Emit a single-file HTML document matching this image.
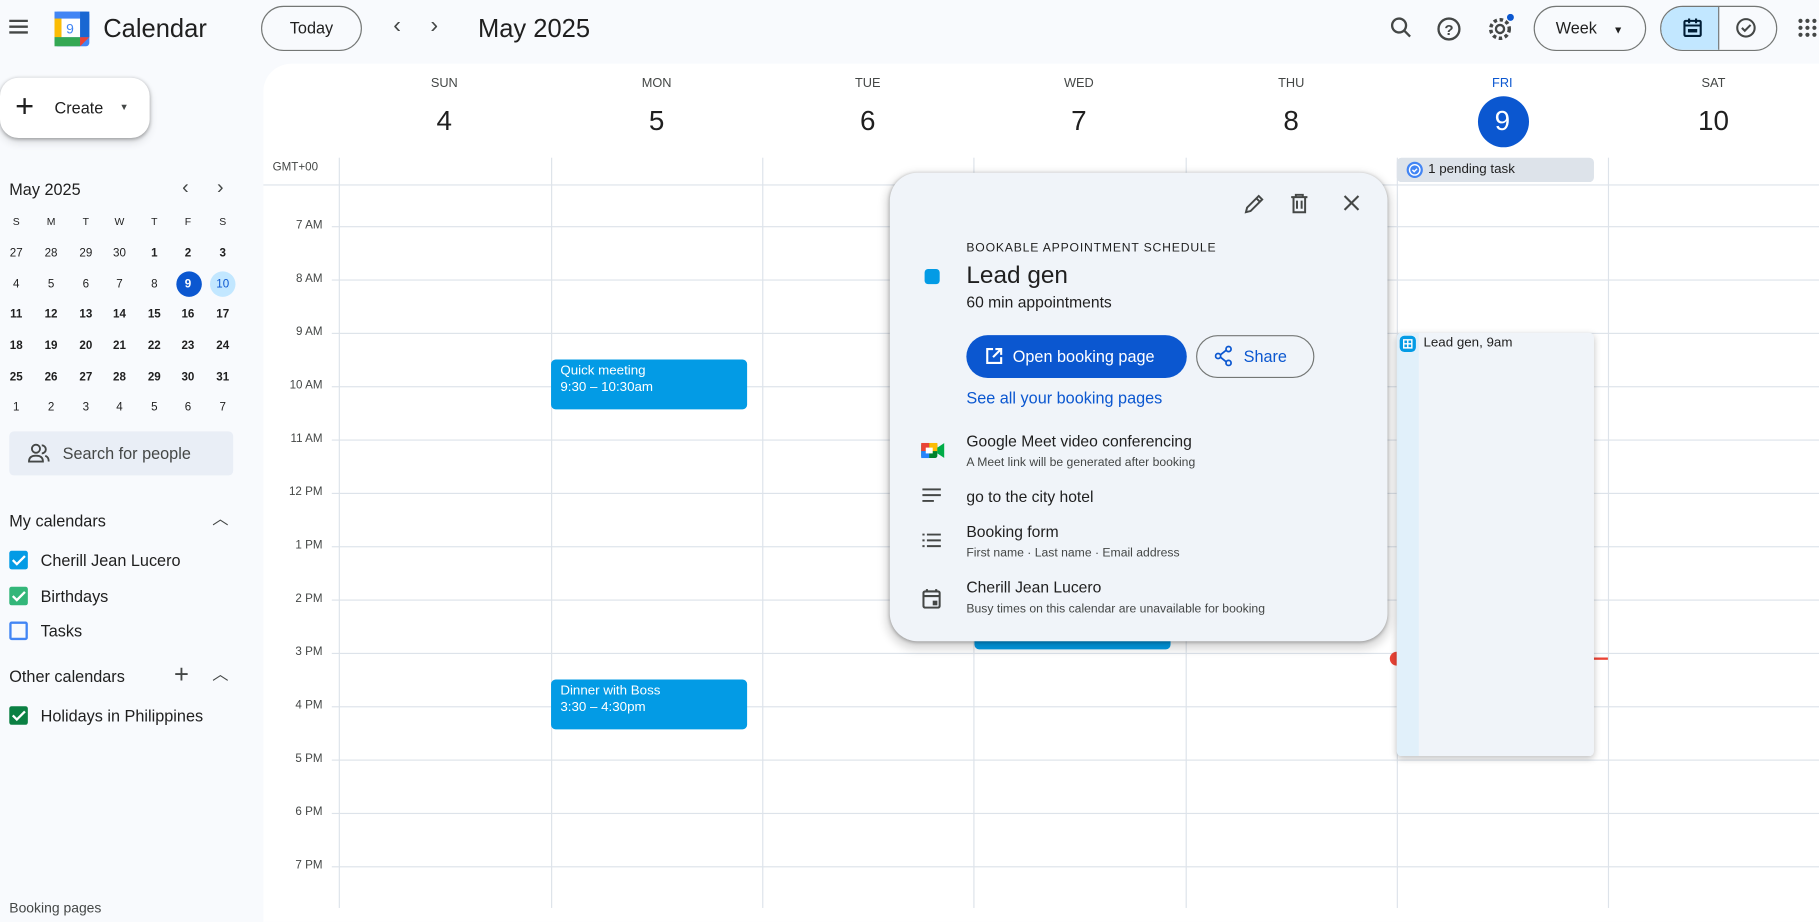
<!DOCTYPE html>
<html><head><meta charset="utf-8"><style>
*{box-sizing:border-box;margin:0;padding:0}
html,body{width:1819px;height:908px;overflow:hidden;background:#f8fafd}
#s{position:absolute;left:0;top:0;width:1568px;height:783px;transform:scale(1.1601,1.1596);transform-origin:0 0;font-family:"Liberation Sans",Arial,sans-serif;color:#1f1f1f;background:#f8fafd}
.a{position:absolute}
.mc{position:absolute;width:20px;text-align:center;font-size:10px;color:#1f1f1f}
.hl{position:absolute;left:286px;right:0;height:1px;background:#dde3ea}
.vl{position:absolute;top:136px;bottom:0;width:1px;background:#dde3ea}
.tl{position:absolute;left:230px;width:48px;text-align:right;font-size:10px;color:#444746}
.dn{position:absolute;width:182px;text-align:center;font-size:11px;color:#444746;top:66px}
.dd{position:absolute;width:182px;text-align:center;font-size:24px;color:#1f1f1f;top:91px}
.ev{position:absolute;background:#039be5;color:#fff;border-radius:4px;font-size:11.5px;padding:3px 8px;line-height:14px}
.cb{position:absolute;left:8px;width:16px;height:16px;border-radius:2px}
.cb svg{position:absolute;left:1px;top:1px}
.cl{position:absolute;left:35px;font-size:14px}
</style></head><body><div id="s">
<svg class="a" style="left:7px;top:15px" width="18" height="16"><path d="M1 3h16M1 8h16M1 13h16" stroke="#444746" stroke-width="2"/></svg>
<svg class="a" style="left:46px;top:8px" width="32" height="32"><rect x="1" y="2" width="30" height="30" rx="3" fill="#4285f4"/><rect x="1" y="24" width="22" height="8" fill="#34a853"/><path d="M23 24h8l-8 8z" fill="#ea4335"/><rect x="23" y="2" width="8" height="22" fill="#1967d2"/><rect x="7" y="8" width="16" height="16" fill="#fff"/><rect x="1" y="2" width="22" height="6" fill="#4285f4"/><rect x="1" y="8" width="6" height="16" fill="#fbbc04"/><text x="11" y="21" font-size="12" fill="#4285f4" font-family="Liberation Sans">9</text></svg>
<div class="a" style="left:89px;top:12px;font-size:22px;color:#1f1f1f">Calendar</div>
<div class="a" style="left:225px;top:5px;width:87px;height:39px;border:1px solid #747775;border-radius:20px;text-align:center;line-height:37px;font-size:14px">Today</div>
<div class="a" style="left:339px;top:11px;font-size:20px;color:#444746">‹</div>
<div class="a" style="left:371px;top:11px;font-size:20px;color:#444746">›</div>
<div class="a" style="left:412px;top:12px;font-size:22px">May 2025</div>
<svg class="a" style="left:1198px;top:14px" width="20" height="20"><circle cx="8" cy="8" r="6" fill="none" stroke="#444746" stroke-width="2"/><path d="M12.5 12.5l5 5" stroke="#444746" stroke-width="2"/></svg>
<svg class="a" style="left:1238px;top:14px" width="22" height="22"><circle cx="11" cy="11" r="9" fill="none" stroke="#444746" stroke-width="2"/><text x="7" y="16" font-size="13" font-weight="bold" fill="#444746">?</text></svg>
<svg class="a" style="left:1281px;top:12px" width="24" height="24"><circle cx="12" cy="13" r="8" fill="none" stroke="#444746" stroke-width="3" stroke-dasharray="3 2.3"/><circle cx="12" cy="13" r="3.5" fill="none" stroke="#444746" stroke-width="2"/><circle cx="21" cy="3" r="3" fill="#0b57d0"/></svg>
<div class="a" style="left:1322px;top:5px;width:97px;height:39px;border:1px solid #747775;border-radius:20px;font-size:14px;line-height:37px;padding-left:18px">Week <span style="font-size:9px;margin-left:10px">▼</span></div>
<div class="a" style="left:1431px;top:5px;width:101px;height:39px;border:1px solid #747775;border-radius:20px;overflow:hidden"><div style="width:50px;height:100%;background:#c2e7ff;border-right:1px solid #747775"></div></div>
<svg class="a" style="left:1450px;top:15px" width="18" height="18"><rect x="2" y="3" width="14" height="13" rx="1" fill="none" stroke="#001d35" stroke-width="1.8"/><path d="M2 7h14M6 1v4M12 1v4" stroke="#001d35" stroke-width="1.8"/><rect x="5" y="10" width="8" height="3" fill="#001d35"/></svg>
<svg class="a" style="left:1496px;top:15px" width="18" height="18"><circle cx="9" cy="9" r="7.5" fill="none" stroke="#444746" stroke-width="1.8"/><path d="M5.5 9l2.5 2.5 5-5" fill="none" stroke="#444746" stroke-width="1.8"/></svg>
<svg class="a" style="left:1550px;top:16px" width="16" height="16"><g fill="#444746"><circle cx="2" cy="2" r="1.8"/><circle cx="8" cy="2" r="1.8"/><circle cx="14" cy="2" r="1.8"/><circle cx="2" cy="8" r="1.8"/><circle cx="8" cy="8" r="1.8"/><circle cx="14" cy="8" r="1.8"/><circle cx="2" cy="14" r="1.8"/><circle cx="8" cy="14" r="1.8"/><circle cx="14" cy="14" r="1.8"/></g></svg>

<div class="a" style="left:0;top:67px;width:129px;height:52px;background:#fff;border-radius:16px;box-shadow:0 1px 3px rgba(0,0,0,.3),0 4px 8px rgba(0,0,0,.12)"></div>
<div class="a" style="left:13px;top:78px;font-size:28px;line-height:28px;color:#1f1f1f">+</div>
<div class="a" style="left:47px;top:85px;font-size:14px">Create</div>
<div class="a" style="left:103px;top:88px;font-size:8px;color:#444746">▼</div>
<div class="a" style="left:8px;top:155px;font-size:14px">May 2025</div>
<div class="a" style="left:157px;top:152px;font-size:17px;color:#444746">‹</div>
<div class="a" style="left:187px;top:152px;font-size:17px;color:#444746">›</div>
<div class="a" style="left:152px;top:234px;width:22px;height:22px;border-radius:50%;background:#0b57d0"></div>
<div class="a" style="left:181px;top:234px;width:22px;height:22px;border-radius:50%;background:#c2e7ff"></div>
<div id="mini"></div>
<div class="a" style="left:8px;top:372px;width:193px;height:38px;background:#e9eef6;border-radius:4px"></div>
<svg class="a" style="left:24px;top:382px" width="20" height="18"><circle cx="7" cy="5" r="3.5" fill="none" stroke="#444746" stroke-width="1.6"/><path d="M1 16c0-4 3-5 6-5s6 1 6 5z" fill="none" stroke="#444746" stroke-width="1.6"/><path d="M12 2a3.5 3.5 0 010 7M15 11c2 1 3 2 3 5" fill="none" stroke="#444746" stroke-width="1.6"/></svg>
<div class="a" style="left:54px;top:383px;font-size:14px;color:#444746">Search for people</div>
<div class="a" style="left:8px;top:441px;font-size:14px">My calendars</div>
<div class="a" style="left:183px;top:437px;font-size:14px;color:#444746">︿</div>
<div class="cb" style="top:475px;background:#039be5"><svg width="14" height="14"><path d="M2 7l3.5 3.5 7-7" stroke="#fff" stroke-width="2" fill="none"/></svg></div>
<div class="cl" style="top:475px">Cherill Jean Lucero</div>
<div class="cb" style="top:506px;background:#33b679"><svg width="14" height="14"><path d="M2 7l3.5 3.5 7-7" stroke="#fff" stroke-width="2" fill="none"/></svg></div>
<div class="cl" style="top:506px">Birthdays</div>
<div class="cb" style="top:536px;border:2px solid #4285f4"></div>
<div class="cl" style="top:536px">Tasks</div>
<div class="a" style="left:8px;top:575px;font-size:14px">Other calendars</div>
<div class="a" style="left:150px;top:569px;font-size:22px;color:#444746">+</div>
<div class="a" style="left:183px;top:571px;font-size:14px;color:#444746">︿</div>
<div class="cb" style="top:609px;background:#0b8043"><svg width="14" height="14"><path d="M2 7l3.5 3.5 7-7" stroke="#fff" stroke-width="2" fill="none"/></svg></div>
<div class="cl" style="top:609px">Holidays in Philippines</div>
<div class="a" style="left:8px;top:776px;font-size:12px;color:#444746">Booking pages</div>

<div class="a" style="left:227px;top:55px;width:1345px;height:740px;background:#fff;border-radius:24px 0 0 0"></div>
<div class="dn" style="left:292px">SUN</div><div class="dd" style="left:292px">4</div>
<div class="dn" style="left:475px">MON</div><div class="dd" style="left:475px">5</div>
<div class="dn" style="left:657px">TUE</div><div class="dd" style="left:657px">6</div>
<div class="dn" style="left:839px">WED</div><div class="dd" style="left:839px">7</div>
<div class="dn" style="left:1022px">THU</div><div class="dd" style="left:1022px">8</div>
<div class="a" style="left:1274px;top:83px;width:44px;height:44px;border-radius:50%;background:#0b57d0"></div>
<div class="dn" style="left:1204px;color:#0b57d0">FRI</div><div class="dd" style="left:1204px;color:#fff">9</div>
<div class="dn" style="left:1386px">SAT</div><div class="dd" style="left:1386px">10</div>
<div class="a" style="left:235px;top:139px;font-size:10px;color:#444746">GMT+00</div>
<div class="a" style="left:227px;top:159px;right:0;height:1px;background:#dde3ea"></div>
<div id="grid"></div>
<div class="a" style="left:1204px;top:136px;width:170px;height:21px;background:#dde3ea;border-radius:4px;font-size:11.5px;line-height:20px;padding-left:27px">1 pending task</div>
<svg class="a" style="left:1212px;top:139px" width="15" height="15"><circle cx="7.5" cy="7.5" r="7" fill="#4285f4"/><circle cx="7.5" cy="7.5" r="4.5" fill="none" stroke="#fff" stroke-width="1.2"/><path d="M5.5 7.5l1.5 1.5 2.5-2.5" stroke="#fff" stroke-width="1.2" fill="none"/></svg>
<div class="ev" style="left:475px;top:310px;width:169px;height:43px">Quick meeting<br>9:30 – 10:30am</div>
<div class="ev" style="left:475px;top:586px;width:169px;height:43px">Dinner with Boss<br>3:30 – 4:30pm</div>
<div class="ev" style="left:840px;top:520px;width:169px;height:40px"></div>
<div class="a" style="left:1204px;top:567px;width:182px;height:2px;background:#ea4335"></div>
<div class="a" style="left:1198px;top:562px;width:12px;height:12px;border-radius:50%;background:#ea4335"></div>
<div class="a" style="left:1204px;top:287px;width:170px;height:365px;background:#f0f4f9;border-radius:4px;box-shadow:0 2px 6px rgba(0,0,0,.25);overflow:hidden"><div style="position:absolute;left:0;top:0;width:19px;height:100%;background:#e1f0fa"></div></div>
<svg class="a" style="left:1206px;top:289px" width="15" height="15"><rect x="0.5" y="0.5" width="14" height="14" rx="4" fill="#039be5"/><path d="M4 4h7v7H4zM4 7.5h7M7.5 4v7" stroke="#fff" stroke-width="1.2" fill="none"/></svg>
<div class="a" style="left:1227px;top:290px;font-size:11.5px">Lead gen, 9am</div>

<div class="a" style="left:767px;top:149px;width:429px;height:404px;background:#f0f4f9;border-radius:24px;box-shadow:0 4px 8px 3px rgba(0,0,0,.15),0 1px 3px rgba(0,0,0,.3)"></div>
<svg class="a" style="left:1071px;top:166px" width="20" height="20"><path d="M3 17l1-4L14 3l3 3L7 16z M12 5l3 3" stroke="#444746" stroke-width="1.7" fill="none"/></svg>
<svg class="a" style="left:1111px;top:166px" width="18" height="20"><path d="M2 4h14M6 4V2h6v2M4 4v13h10V4M7 7v7M11 7v7" stroke="#444746" stroke-width="1.7" fill="none"/></svg>
<svg class="a" style="left:1157px;top:167px" width="16" height="16"><path d="M2 2l12 12M14 2L2 14" stroke="#444746" stroke-width="1.8"/></svg>
<div class="a" style="left:833px;top:208px;font-size:10.5px;letter-spacing:.7px">BOOKABLE APPOINTMENT SCHEDULE</div>
<div class="a" style="left:797px;top:232px;width:13px;height:13px;border-radius:3px;background:#039be5"></div>
<div class="a" style="left:833px;top:226px;font-size:21px">Lead gen</div>
<div class="a" style="left:833px;top:253px;font-size:13.5px">60 min appointments</div>
<div class="a" style="left:833px;top:289px;width:190px;height:37px;background:#0b57d0;border-radius:20px;color:#fff;font-size:14px;line-height:37px;padding-left:40px">Open booking page</div>
<svg class="a" style="left:849px;top:299px" width="16" height="16"><path d="M7 2H2v12h12V9M9 2h5v5M14 2L7 9" stroke="#fff" stroke-width="1.8" fill="none"/></svg>
<div class="a" style="left:1031px;top:289px;width:102px;height:37px;border:1px solid #747775;border-radius:20px;color:#0b57d0;font-size:14px;line-height:35px;padding-left:40px">Share</div>
<svg class="a" style="left:1047px;top:298px" width="16" height="18"><circle cx="12" cy="3" r="2.2" fill="none" stroke="#0b57d0" stroke-width="1.5"/><circle cx="3" cy="9" r="2.2" fill="none" stroke="#0b57d0" stroke-width="1.5"/><circle cx="12" cy="15" r="2.2" fill="none" stroke="#0b57d0" stroke-width="1.5"/><path d="M5 8l5-4M5 10l5 4" stroke="#0b57d0" stroke-width="1.5"/></svg>
<div class="a" style="left:833px;top:335px;font-size:14px;color:#0b57d0">See all your booking pages</div>
<svg class="a" style="left:794px;top:380px" width="20" height="17"><rect x="0" y="2" width="14" height="13" rx="2" fill="#00832d"/><rect x="0" y="2" width="7" height="7" fill="#ea4335"/><rect x="7" y="2" width="7" height="7" fill="#fbbc04"/><rect x="0" y="9" width="7" height="6" fill="#2684fc"/><path d="M14 6l6-4v13l-6-4z" fill="#00ac47"/><rect x="4" y="6" width="6" height="5" fill="#fff"/></svg>
<div class="a" style="left:833px;top:373px;font-size:13.5px">Google Meet video conferencing</div>
<div class="a" style="left:833px;top:393px;font-size:10.5px;color:#444746">A Meet link will be generated after booking</div>
<svg class="a" style="left:795px;top:421px" width="18" height="14"><path d="M0 1h16M0 6h16M0 11h10" stroke="#444746" stroke-width="1.7"/></svg>
<div class="a" style="left:833px;top:421px;font-size:13.5px">go to the city hotel</div>
<svg class="a" style="left:795px;top:460px" width="18" height="14"><path d="M0 1h2M0 6h2M0 11h2M4 1h12M4 6h12M4 11h12" stroke="#444746" stroke-width="1.7"/></svg>
<div class="a" style="left:833px;top:451px;font-size:13.5px">Booking form</div>
<div class="a" style="left:833px;top:471px;font-size:10.5px;color:#444746">First name · Last name · Email address</div>
<svg class="a" style="left:795px;top:507px" width="16" height="18"><rect x="1" y="3" width="14" height="14" rx="1.5" fill="none" stroke="#444746" stroke-width="1.8"/><path d="M1 7h14M4 1v3M12 1v3" stroke="#444746" stroke-width="1.8"/><rect x="9" y="11" width="4" height="4" fill="#444746"/></svg>
<div class="a" style="left:833px;top:499px;font-size:13.5px">Cherill Jean Lucero</div>
<div class="a" style="left:833px;top:519px;font-size:10.5px;color:#444746">Busy times on this calendar are unavailable for booking</div>
</div>
<script>
var m=document.getElementById('mini'),h='',xs=[14,44,74,103,133,162,192];
['S','M','T','W','T','F','S'].forEach(function(d,i){h+='<div class="mc" style="left:'+(xs[i]-10)+'px;top:186px;font-size:9px">'+d+'</div>'});
var rows=[[27,28,29,30,1,2,3],[4,5,6,7,8,9,10],[11,12,13,14,15,16,17],[18,19,20,21,22,23,24],[25,26,27,28,29,30,31],[1,2,3,4,5,6,7]],ys=[213,240,266,293,320,346];
rows.forEach(function(r,j){r.forEach(function(d,i){var st='';if(j==0&&i>=4||j==2||j==3||j==4)st='font-weight:bold;';if(j==1&&i==5)st='color:#fff;font-weight:bold;';if(j==1&&i==6)st='color:#0b57d0;';h+='<div class="mc" style="left:'+(xs[i]-10)+'px;top:'+ys[j]+'px;'+st+'">'+d+'</div>'})});
m.innerHTML=h;
var g=document.getElementById('grid'),s='';
['7 AM','8 AM','9 AM','10 AM','11 AM','12 PM','1 PM','2 PM','3 PM','4 PM','5 PM','6 PM','7 PM'].forEach(function(l,i){var y=195+i*46;s+='<div class="hl" style="top:'+y+'px"></div><div class="tl" style="top:'+(y-6)+'px">'+l+'</div>'});
[292,475,657,839,1022,1204,1386].forEach(function(x){s+='<div class="vl" style="left:'+x+'px"></div>'});
g.innerHTML=s;
</script>
</body></html>
